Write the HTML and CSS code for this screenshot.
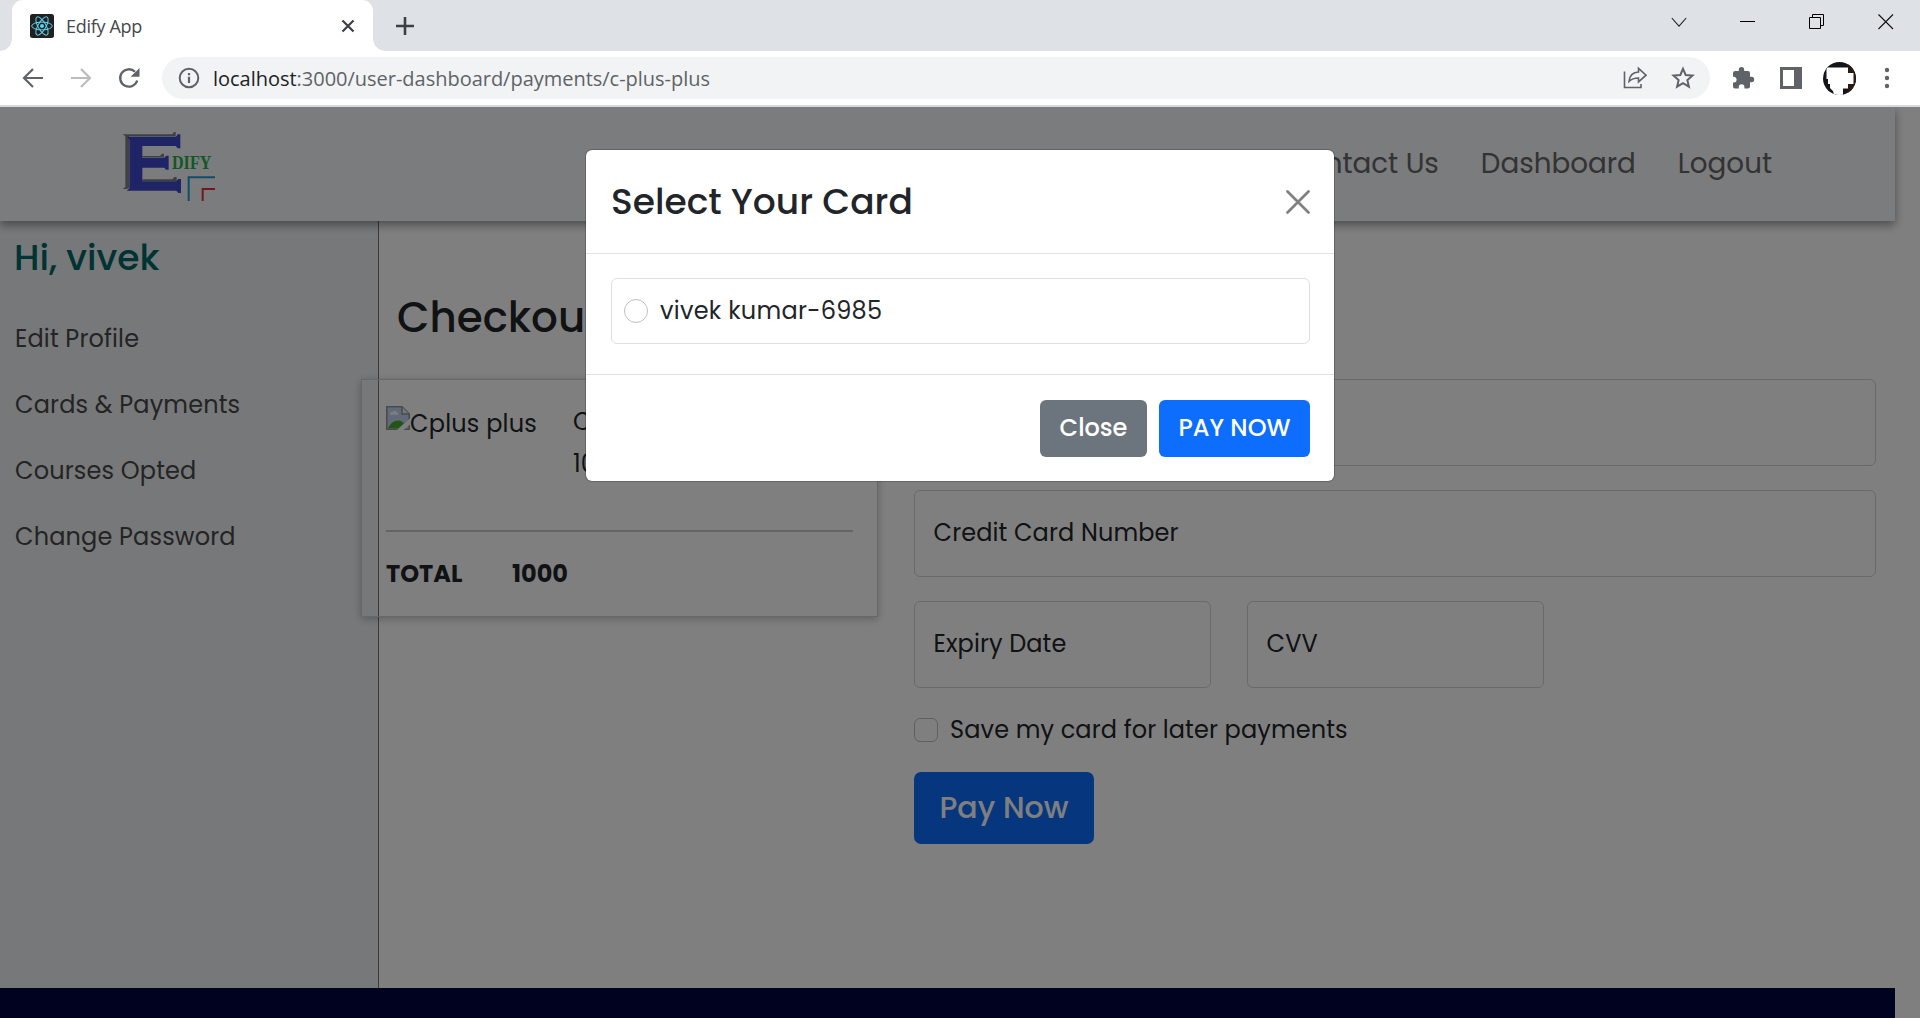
FILE: index.html
```
<!DOCTYPE html>
<html lang="en">
<head>
<meta charset="utf-8">
<title>Edify App</title>
<link rel="stylesheet" href="styles.css">
</head>
<body>
<div class="browser">
  <div class="tabstrip">
    <div class="tab">
      <svg class="favicon" viewBox="0 0 24 24"><rect width="24" height="24" rx="2.5" fill="#212121"/><g fill="none" stroke="#5fd3ee" stroke-width="1"><ellipse cx="12" cy="12" rx="10.3" ry="3.9"/><ellipse cx="12" cy="12" rx="10.3" ry="3.9" transform="rotate(60 12 12)"/><ellipse cx="12" cy="12" rx="10.3" ry="3.9" transform="rotate(120 12 12)"/></g><circle cx="12" cy="12" r="2" fill="#5fd3ee"/></svg>
      <span class="tab-title">Edify App</span>
      <svg class="tab-close" viewBox="0 0 14 14"><path d="M1.5 1.5l11 11M12.500 1.500l-11 11" stroke="#3c4043" stroke-width="2.2" fill="none"/></svg>
    </div>
    <svg class="new-tab" viewBox="0 0 20 20"><path d="M10 1v18M1 10h18" stroke="#3c4043" stroke-width="2.6"/></svg>
    <div class="window-controls">
      <svg viewBox="0 0 16 16"><path d="M.8 4l7.200 8.200L15.200 4" fill="none" stroke="#222" stroke-width="1.100"/></svg>
      <svg viewBox="0 0 16 16"><path d="M0 7.500h15" stroke="#000"/></svg>
      <svg viewBox="0 0 16 16"><path d="M.5 3.500h11v11H.5zM3.500 3.500v-3h11v11h-3" fill="none" stroke="#000"/></svg>
      <svg viewBox="0 0 16 16"><path d="M.5.5l14.500 14.500M15 .5L.5 15" stroke="#111" stroke-width="1.100"/></svg>
    </div>
  </div>
  <div class="toolbar">
    <svg viewBox="0 0 24 24"><path d="M22 12H3.500M12 3L3 12l9 9" fill="none" stroke="#5f6368" stroke-width="2.200"/></svg>
    <svg viewBox="0 0 24 24"><path d="M2 12h18.500M12 3l9 9-9 9" fill="none" stroke="#babcbe" stroke-width="2.200"/></svg>
    <svg viewBox="0 0 24 24"><path d="M20.200 14.500A8.700 8.700 0 1 1 18 5.800" fill="none" stroke="#5f6368" stroke-width="2.300"/><path d="M22.500 2v8.800h-8.800z" fill="#5f6368"/></svg>
    <div class="omnibox">
      <svg class="info" viewBox="0 0 22 22"><circle cx="11" cy="11" r="9.300" fill="none" stroke="#5f6368" stroke-width="2"/><path d="M11 9.800v6.200M11 6v2.200" stroke="#5f6368" stroke-width="2.200"/></svg>
      <span class="url"><span class="host">localhost</span>:3000/user-dashboard/payments/c-plus-plus</span>
      <svg class="share" viewBox="0 0 24 24"><path d="M1.500 5.500V21.500H18V18" fill="none" stroke="#5f6368" stroke-width="1.600"/><path d="M6 15.500C6.500 9.500 10.500 6.300 15.500 6V2.300L23 9.200l-7.500 6.700V12C11 12 8.500 13 6 15.500z" fill="none" stroke="#5f6368" stroke-width="1.600"/></svg>
      <svg viewBox="0 0 24 24"><path d="M12 2.800l2.700 6.200 6.800.6-5.100 4.500 1.500 6.600-5.900-3.500-5.900 3.500 1.500-6.600L2.500 9.600 9.300 9z" fill="none" stroke="#5f6368" stroke-width="2"/></svg>
    </div>
    <svg class="ext" viewBox="0 0 24 24"><path d="M20.500 10.800H19V7a2 2 0 0 0-2-2h-3.800V3.800a2.700 2.700 0 0 0-5.400 0V5H4a2 2 0 0 0-2 2v3.800h1.300a2.900 2.900 0 0 1 0 5.700H2V20.500a2 2 0 0 0 2 2h3.800v-1.400a2.800 2.800 0 0 1 5.600 0v1.400H17a2 2 0 0 0 2-2v-4.300h1.500a2.700 2.700 0 0 0 0-5.400z" fill="#5f6368"/></svg>
    <svg viewBox="0 0 24 24"><path d="M1 1h22v22H1zM4 4v16h11V4z" fill="#5f6368" fill-rule="evenodd"/></svg>
    <svg class="avatar" viewBox="0 0 33 33"><clipPath id="disc"><circle cx="16.500" cy="16.500" r="16.500"/></clipPath><g clip-path="url(#disc)"><path d="M0 0h33v33H0z" fill="#14161c"/><path d="M25 0h8v33h-8z" fill="#2a1a14"/><path d="M4 7V5.500H25V11h5.500v11H25v4.500h-5V33H11l-1-4-3-3v-4H5v-5H3.500V7z" fill="#fff"/></g></svg>
    <svg class="dots" viewBox="0 0 24 24"><g fill="#5f6368"><circle cx="12" cy="4" r="2.200"/><circle cx="12" cy="12" r="2.200"/><circle cx="12" cy="20" r="2.200"/></g></svg>
  </div>
</div>

<div class="viewport">
  <div class="page">
    <header class="navbar">
      <svg class="logo" viewBox="66 63 282 213">
        <path d="M68 73H217L222 66H227V79H87V234L80 237H68L76 231V79zM127 138H180L186 131H192V142H127zM127 208H217L223 201H230V213H127z" fill="#808080"/>
        <path d="M82 80H228L233 73H241V115H233L227 108H127V143H193L198 137H206V179H198L193 173H127V214H229L234 207H243V249H235L229 242H80L88 235V90z" fill="#3f48cc"/>
        <text x="216" y="178" textLength="118" lengthAdjust="spacingAndGlyphs" class="logo-text">DIFY</text>
        <path d="M345 202H266V273" fill="none" stroke="#1e9ad6" stroke-width="6"/>
        <path d="M345 237H308V273" fill="none" stroke="#e0303a" stroke-width="6"/>
      </svg>
      <nav class="links">
        <a class="link">Contact Us</a>
        <a class="link">Dashboard</a>
        <a class="link">Logout</a>
      </nav>
    </header>
    <div class="body">
      <aside class="sidebar">
        <h2 class="greeting">Hi, vivek</h2>
        <a class="item">Edit Profile</a>
        <a class="item">Cards &amp; Payments</a>
        <a class="item">Courses Opted</a>
        <a class="item">Change Password</a>
      </aside>
      <main class="main">
        <h1 class="heading">Checkout</h1>
        <div class="columns">
          <section class="order">
            <div class="product">
              <div class="thumb">
                <svg viewBox="0 0 24 24"><path d="M1 1h15l7 7v15H1z" fill="#c3d5f7"/><path d="M4 8.500a2 2 0 0 1 2.500-2.500 3 3 0 0 1 5 1 1.500 1.500 0 0 1 .5 1.800z" fill="#fff"/><path d="M2 22.500c2-5 6-8 10-8s5 2 6 3l-5.500 5z" fill="#4aa82e"/><path d="M.8.8h15.200l7.200 7.200v15.200H.8z" fill="none" stroke="#959595" stroke-width="1.600"/><path d="M16 1v7h7" fill="#eee" stroke="#959595" stroke-width="1.500"/><path d="M24 12.500L11 24h6.500l6.500-5.500z" fill="#fff"/></svg>
                <span class="alt">Cplus plus</span>
              </div>
              <div class="details"><div>C++</div><div>1000</div></div>
            </div>
            <div class="rule"></div>
            <div class="total"><span class="total-label">TOTAL</span><span>1000</span></div>
          </section>
          <form class="payment">
            <div class="field"></div>
            <div class="field">Credit Card Number</div>
            <div class="pair"><div class="field">Expiry Date</div><div class="field">CVV</div></div>
            <label class="save"><span class="checkbox"></span>Save my card for later payments</label>
            <button type="button" class="pay">Pay Now</button>
          </form>
        </div>
      </main>
    </div>
    <footer class="footer"></footer>
  </div>
  <div class="backdrop"></div>
  <div class="modal">
    <div class="modal-header">
      <h4 class="modal-title">Select Your Card</h4>
      <svg class="modal-close" viewBox="0 0 24 24"><path d="M1.500 1.500l21 21M22.500 1.500l-21 21" stroke="#808080" stroke-width="2.700" stroke-linecap="round"/></svg>
    </div>
    <div class="modal-body">
      <label class="card-option"><span class="radio"></span>vivek kumar-6985</label>
    </div>
    <div class="modal-footer">
      <button type="button" class="btn btn-close">Close</button>
      <button type="button" class="btn btn-pay">PAY NOW</button>
    </div>
  </div>
</div>
</body>
</html>
```
FILE: styles.css
```
* { box-sizing: border-box; }
body {
  margin: 0;
  width: 1920px;
  height: 1018px;
  overflow: hidden;
  display: flex;
  flex-direction: column;
  background: #fff;
  color: #212529;
  font: 400 24px/36px Poppins, Inter, sans-serif;
}
h1, h2, h4 { margin: 0; }
svg { display: block; flex: none; }
button { border: 0; font: inherit; padding: 0; }

/* Browser chrome */
.browser { height: 107px; border-bottom: 2px solid #d7d9dc; font-family: "Segoe UI", "Open Sans", sans-serif; }
.tabstrip { height: 51px; background: #dee1e6; display: flex; padding-left: 12px; }
.tab {
  position: relative;
  width: 361px;
  background: #fff;
  border-radius: 11px 11px 0 0;
  display: flex;
  align-items: center;
  padding: 0 18px 0 18px;
}
.tab::before, .tab::after {
  content: "";
  position: absolute;
  bottom: 0;
  width: 12px;
  height: 12px;
}
.tab::before { left: -12px; background: radial-gradient(circle at 0 0, #dee1e6 11.5px, #fff 12px); }
.tab::after { right: -12px; background: radial-gradient(circle at 100% 0, #dee1e6 11.5px, #fff 12px); }
.favicon { width: 24px; height: 24px; }
.tab-title { margin-left: 12px; font-size: 18px; letter-spacing: -.3px; color: #45484c; }
.tab-close { width: 14px; height: 14px; margin-left: auto; }
.new-tab { width: 20px; height: 20px; margin: 16px 0 0 22px; }
.window-controls { display: flex; gap: 53px; margin: 14px 26px 0 auto; height: 16px; }
.window-controls svg { width: 16px; height: 16px; }
.toolbar { height: 54px; display: flex; align-items: center; padding-left: 21px; }
.toolbar svg { width: 24px; height: 24px; margin-right: 24px; }
.omnibox {
  margin-left: -3px;
  width: 1548px;
  height: 42px;
  border-radius: 21px;
  background: #f1f3f4;
  display: flex;
  align-items: center;
  padding: 0 15px 0 16px;
}
.toolbar .info { width: 22px; height: 22px; margin-right: 13px; }
.url { flex: 1; font-size: 20px; letter-spacing: -.02px; color: #5f6368; padding-top: 1px; }
.host { color: #202124; }
.toolbar .share { margin-right: 24px; }
.omnibox svg:last-child { margin-right: 0; }
.toolbar .ext { margin-left: 21px; }
.toolbar .avatar { width: 33px; height: 33px; margin: 1px 19px 0 -4px; }
.toolbar .dots { margin-right: 0; }

/* Site */
.viewport { position: relative; height: 911px; overflow: hidden; }
.page { height: 911px; display: flex; flex-direction: column; }
.navbar {
  position: relative;
  width: 1895px;
  height: 114px;
  background: #f6f8fa;
  box-shadow: 0 4px 9px rgba(0, 0, 0, .4);
  display: flex;
  justify-content: space-between;
  padding: 0 123px 0 122px;
  z-index: 1;
}
.logo { width: 94px; height: 71px; margin-top: 24px; overflow: visible; }
.logo-text { font: bold 56px "Liberation Serif", serif; fill: #22b14c; }
.links { display: flex; gap: 42px; }
.link { color: #666; font-size: 27.75px; line-height: 114px; }
.body { display: flex; flex: 1; width: 1895px; }
.sidebar {
  width: 379px;
  background: #eff1f3;
  border-right: 1px solid #777;
  padding: 10px 0 0 15px;
  display: flex;
  flex-direction: column;
}
.greeting { font-size: 36px; font-weight: 500; line-height: 54px; color: #066; margin: 0 0 36px -1px; }
.item { color: #484848; height: 36px; margin-bottom: 30px; letter-spacing: .15px; }
.main { flex: 1; padding: 72px 18px 0; }
.heading { font-size: 42px; font-weight: 500; line-height: 50px; margin-bottom: 36px; }
.columns { display: flex; gap: 36px; margin-left: -36px; }
.order {
  width: 517px;
  height: 238px;
  border: 1px solid #d0d0d0;
  box-shadow: 0 2px 8px rgba(0, 0, 0, .25);
  padding: 21px 24px 0;
}
.product { display: flex; height: 129px; }
.thumb { display: flex; width: 187px; padding-top: 5px; }
.thumb svg { width: 24px; height: 24px; }
.alt { letter-spacing: .2px; }
.details { line-height: 42px; }
.rule { height: 2px; width: 467px; background: #c8c8c8; }
.total { display: flex; font-weight: 700; margin-top: 24px; }
.total-label { width: 126px; }
.payment { flex: none; width: 962px; display: flex; flex-direction: column; gap: 24px; letter-spacing: .12px; }
.field { height: 87px; border: 1px solid #d0d3d7; border-radius: 6px; padding-left: 18.5px; line-height: 84px; }
.pair { display: flex; gap: 36px; }
.pair .field { width: 297px; }
.save { display: flex; align-items: center; gap: 12px; }
.checkbox { width: 24px; height: 24px; border: 1px solid #bfbfbf; border-radius: 6px; }
.pay {
  width: 180px;
  height: 72px;
  border-radius: 7px;
  background: #0d6efd;
  color: #fff;
  font-size: 30px;
  font-weight: 500;
}

/* Dialog */
.backdrop { position: absolute; inset: 0; background: rgba(0, 0, 0, .5); z-index: 2; }
.modal {
  position: absolute;
  z-index: 3;
  left: 585px;
  top: 42px;
  width: 750px;
  height: 333px;
  background: #fff;
  background-clip: padding-box;
  border: 1px solid rgba(0, 0, 0, .2);
  border-radius: 7px;
}
.modal-header {
  height: 104px;
  border-bottom: 1px solid #dee2e6;
  display: flex;
  align-items: center;
  justify-content: space-between;
  padding: 0 24px 0 25px;
}
.modal-title { font-size: 36px; font-weight: 500; }
.modal-close { width: 24px; height: 24px; }
.modal-body { padding: 24px 24px 30px 25px; height: 120px; }
.card-option {
  height: 66px;
  border: 1px solid #dfdfdf;
  border-radius: 6px;
  display: flex;
  align-items: center;
  gap: 12px;
  padding: 0 12px 1px;
  letter-spacing: .28px;
}
.radio { width: 24px; height: 24px; border: 1px solid #bfbfbf; border-radius: 50%; }
.modal-footer { border-top: 1px solid #dee2e6; display: flex; justify-content: flex-end; gap: 12px; padding: 25px 24px 0; }
.btn { height: 57px; border-radius: 6px; color: #fff; font-weight: 500; padding-bottom: 1px; }
.btn-close { width: 107px; background: #6c757d; }
.btn-pay { width: 151px; background: #0d6efd; }
.footer { width: 1895px; height: 30px; background: #00043e; }
```
